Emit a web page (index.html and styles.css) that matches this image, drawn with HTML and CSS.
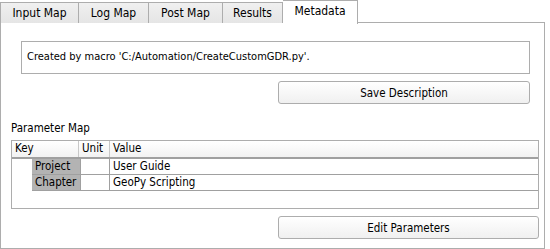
FILE: index.html
```html
<!DOCTYPE html>
<html lang="en">
  <head>
    <meta charset="UTF-8" />
    <title>Metadata</title>
    <link rel="stylesheet" href="styles.css">
  </head>
  <body>
    <div class="tabs">
      <div class="tab tab-input">Input Map</div>
      <div class="tab tab-log">Log Map</div>
      <div class="tab tab-post">Post Map</div>
      <div class="tab tab-results">Results</div>
      <div class="tab tab-meta active">Metadata</div>
    </div>
    <div class="pane">
      <div class="description">Created by macro 'C:/Automation/CreateCustomGDR.py'.</div>
      <div class="btn-row save-row">
        <button class="btn save-btn">Save Description</button>
      </div>
      <div class="section-label">Parameter Map</div>
      <div class="param-table">
        <div class="row head">
          <div class="cell key">Key</div>
          <div class="cell unit">Unit</div>
          <div class="cell value">Value</div>
        </div>
        <div class="row item">
          <div class="cell name">Project</div>
          <div class="cell unit"></div>
          <div class="cell value">User Guide</div>
        </div>
        <div class="row item">
          <div class="cell name">Chapter</div>
          <div class="cell unit"></div>
          <div class="cell value">GeoPy Scripting</div>
        </div>
      </div>
      <div class="btn-row edit-row">
        <button class="btn edit-btn">Edit Parameters</button>
      </div>
    </div>
  </body>
</html>
```
FILE: styles.css
```css
body {
  margin: 0;
  background-color: #ffffff;
  font-family: "DejaVu Sans Condensed", "DejaVu Sans", sans-serif;
  font-size: 11px;
  color: #000000;
}
.tabs {
  display: flex;
  height: 23px;
  position: relative;
  z-index: 1;
  font-size: 12px;
}
.tab {
  box-sizing: border-box;
  height: 21px;
  margin-top: 2px;
  padding-top: 3px;
  text-align: center;
  border: 1px solid #adadad;
  border-left: none;
  border-bottom: none;
  background: linear-gradient(#f0f0f0, #e5e5e5);
}
.tab-input {
  width: 79px;
  border-left: 1px solid #adadad;
}
.tab-log {
  width: 70px;
}
.tab-post {
  width: 74px;
}
.tab-results {
  width: 60px;
}
.tab-meta {
  width: 75px;
}
.tab.active {
  height: 24px;
  margin-top: 0;
  padding-top: 3px;
  background: #ffffff;
  border-left: none;
}
.pane {
  box-sizing: border-box;
  width: 545px;
  height: 227px;
  margin-top: -1px;
  border: 1px solid #adadad;
  padding: 18px 5px 0 10px;
}
.description {
  box-sizing: border-box;
  width: 509px;
  height: 33px;
  margin-left: 10px;
  padding: 8px 0 0 5px;
  border: 1px solid #adadad;
}
.btn-row {
  display: flex;
  justify-content: flex-end;
}
.save-row {
  width: 519px;
  margin-top: 7px;
}
.edit-row {
  width: 528px;
  margin-top: 7px;
}
.btn {
  box-sizing: border-box;
  height: 23px;
  font-family: inherit;
  font-size: 11.5px;
  color: #000000;
  border: 1px solid #adadad;
  border-radius: 3px;
  background: linear-gradient(#ffffff, #f0f0f0);
}
.save-btn {
  width: 252px;
}
.edit-btn {
  width: 261px;
}
.section-label {
  margin-top: 17px;
  height: 19px;
  font-size: 11.5px;
}
.param-table {
  box-sizing: border-box;
  width: 528px;
  height: 69px;
  border: 1px solid #adadad;
  font-size: 11.5px;
}
.row {
  display: flex;
}
.head {
  height: 16px;
  border-bottom: 2px solid #a0a0a0;
  background: linear-gradient(#ffffff, #f2f2f2);
}
.item {
  height: 15px;
  border-bottom: 1px solid #a0a0a0;
  margin-left: 20px;
}
.cell {
  box-sizing: border-box;
  padding: 0 0 0 3px;
  white-space: nowrap;
}
.head .key {
  width: 67px;
  border-right: 1px solid #c8c8c8;
}
.head .unit {
  width: 31px;
  border-right: 1px solid #c8c8c8;
}
.name {
  width: 49px;
  background-color: #b3b3b3;
  border-right: 1px solid #a0a0a0;
}
.item .unit {
  width: 29px;
  border-right: 1px solid #a0a0a0;
}
.value {
  flex: 1;
}
```
